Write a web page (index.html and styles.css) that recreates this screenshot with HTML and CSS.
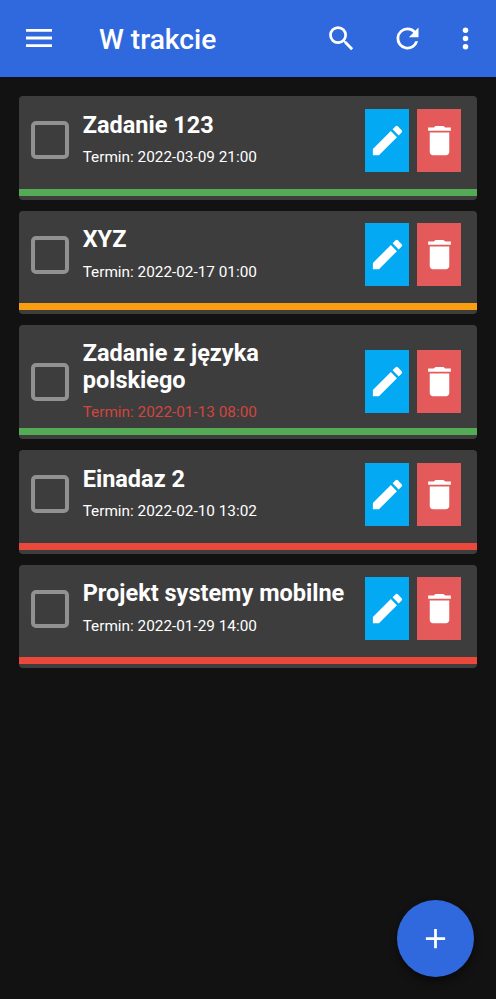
FILE: index.html
```html
<!DOCTYPE html>
<html lang="pl">
<head>
<meta charset="utf-8">
<title>W trakcie</title>
<link rel="stylesheet" href="styles.css">
</head>
<body>
<svg class="defs" width="0" height="0" aria-hidden="true">
  <symbol id="edit" viewBox="0 0 24 24"><path d="M3 17.25V21h3.75L17.81 9.94l-3.75-3.75L3 17.25zM20.71 7.04a1 1 0 0 0 0-1.41l-2.34-2.34a1 1 0 0 0-1.41 0l-1.83 1.83 3.75 3.75 1.83-1.83z"/></symbol>
  <symbol id="trash" viewBox="0 0 24 24"><path d="M6 19c0 1.1.9 2 2 2h8c1.1 0 2-.9 2-2V7H6v12zM19 4h-3.5l-1-1h-5l-1 1H5v2h14V4z"/></symbol>
</svg>
<header class="bar">
  <svg class="menu" viewBox="0 0 26 18"><path d="M0 0h26v2.8H0zM0 7.6h26v2.8H0zM0 15.2h26V18H0z"/></svg>
  <h1 class="heading">W trakcie</h1>
  <svg class="icon search" viewBox="0 0 24 24"><path d="M15.5 14h-.79l-.28-.27A6.47 6.47 0 0 0 16 9.5 6.5 6.5 0 1 0 9.5 16c1.61 0 3.09-.59 4.23-1.57l.27.28v.79l5 4.99L20.49 19l-4.99-5zm-6 0C7.01 14 5 11.99 5 9.5S7.01 5 9.5 5 14 7.01 14 9.5 11.99 14 9.5 14z"/></svg>
  <svg class="icon refresh" viewBox="0 0 24 24"><path d="M17.65 6.35A7.96 7.96 0 0 0 12 4a8 8 0 1 0 7.73 10h-2.08A6 6 0 1 1 12 6c1.66 0 3.14.69 4.22 1.78L13 11h7V4l-2.35 2.35z"/></svg>
  <svg class="icon more" viewBox="0 0 24 24"><circle cx="12" cy="6" r="2"/><circle cx="12" cy="12" r="2"/><circle cx="12" cy="18" r="2"/></svg>
</header>
<main class="list">
  <article class="card green">
    <div class="row">
      <span class="check"></span>
      <div class="text"><h2 class="title">Zadanie 123</h2><p class="due">Termin: 2022-03-09 21:00</p></div>
      <span class="btn edit"><svg class="glyph"><use href="#edit"/></svg></span>
      <span class="btn trash"><svg class="glyph"><use href="#trash"/></svg></span>
    </div>
    <div class="stripe"></div>
  </article>
  <article class="card orange">
    <div class="row">
      <span class="check"></span>
      <div class="text"><h2 class="title">XYZ</h2><p class="due">Termin: 2022-02-17 01:00</p></div>
      <span class="btn edit"><svg class="glyph"><use href="#edit"/></svg></span>
      <span class="btn trash"><svg class="glyph"><use href="#trash"/></svg></span>
    </div>
    <div class="stripe"></div>
  </article>
  <article class="card green tall">
    <div class="row">
      <span class="check"></span>
      <div class="text"><h2 class="title">Zadanie z języka polskiego</h2><p class="due late">Termin: 2022-01-13 08:00</p></div>
      <span class="btn edit"><svg class="glyph"><use href="#edit"/></svg></span>
      <span class="btn trash"><svg class="glyph"><use href="#trash"/></svg></span>
    </div>
    <div class="stripe"></div>
  </article>
  <article class="card red">
    <div class="row">
      <span class="check"></span>
      <div class="text"><h2 class="title">Einadaz 2</h2><p class="due">Termin: 2022-02-10 13:02</p></div>
      <span class="btn edit"><svg class="glyph"><use href="#edit"/></svg></span>
      <span class="btn trash"><svg class="glyph"><use href="#trash"/></svg></span>
    </div>
    <div class="stripe"></div>
  </article>
  <article class="card red">
    <div class="row">
      <span class="check"></span>
      <div class="text"><h2 class="title">Projekt systemy mobilne</h2><p class="due">Termin: 2022-01-29 14:00</p></div>
      <span class="btn edit"><svg class="glyph"><use href="#edit"/></svg></span>
      <span class="btn trash"><svg class="glyph"><use href="#trash"/></svg></span>
    </div>
    <div class="stripe"></div>
  </article>
</main>
<div class="fab"><svg class="plus" viewBox="0 0 24 24"><path d="M19 13h-6v6h-2v-6H5v-2h6V5h2v6h6z"/></svg></div>
</body>
</html>
```

FILE: styles.css
```css
* { box-sizing: border-box; margin: 0; padding: 0; }
body {
  min-height: 999px;
  background: #121212;
  color: #fff;
  font-family: Roboto, sans-serif;
}
svg { fill: #fff; display: block; flex: none; }
.defs { position: absolute; }
.bar {
  display: flex;
  align-items: center;
  height: 77px;
  padding-left: 26px;
  background: #3069de;
}
.menu { width: 26px; height: 18px; margin-bottom: 1px; }
.heading {
  width: 226px;
  margin-left: 47px;
  font-size: 28.2px;
  font-weight: 500;
  line-height: 36px;
  padding-top: 2px;
}
.icon { width: 33px; height: 33px; }
.refresh { margin-left: 33px; }
.more { margin-left: 25px; }
.list {
  display: flex;
  flex-direction: column;
  gap: 11px;
  padding: 19.2px 19px 0;
}
.card {
  display: flex;
  flex-direction: column;
  height: 103.4px;
  border-radius: 4px;
  background: #3d3d3d;
  overflow: hidden;
}
.tall { height: 114.2px; }
.row {
  display: flex;
  align-items: center;
  height: 92.7px;
  padding: 0 15.6px 4.7px 12.4px;
}
.tall .row { height: 103px; padding-top: 10.4px; padding-bottom: 0; }
.check {
  width: 38px;
  height: 38px;
  border: 4px solid #919191;
  border-radius: 5px;
}
.text { flex: 1; margin-left: 13.3px; padding-bottom: 2.3px; }
.title { width: 268px; font-size: 23.5px; font-weight: 700; line-height: 27.4px; }
.tall .title { width: 220px; }
.tall .text { padding-bottom: 2.4px; }
.due { margin-top: 9px; font-size: 15.33px; line-height: 18px; }
.tall .due { margin-top: 8.6px; }
.late { color: #d2453d; }
.btn {
  display: grid;
  place-items: center;
  width: 44px;
  height: 63px;
}
.edit { background: #04a9f4; }
.trash { margin-left: 8.3px; background: #e45a5a; }
.glyph { width: 39px; height: 39px; }
.stripe { height: 7px; }
.green .stripe { background: #55ab55; }
.orange .stripe { background: #f99d11; }
.red .stripe { background: #e9483b; }
.fab {
  position: absolute;
  left: 397px;
  top: 900px;
  display: grid;
  place-items: center;
  width: 77px;
  height: 77px;
  border-radius: 50%;
  background: #3069de;
  box-shadow: 0 5px 9px rgba(0, 0, 0, .45);
}
.plus { width: 33px; height: 33px; }
```
